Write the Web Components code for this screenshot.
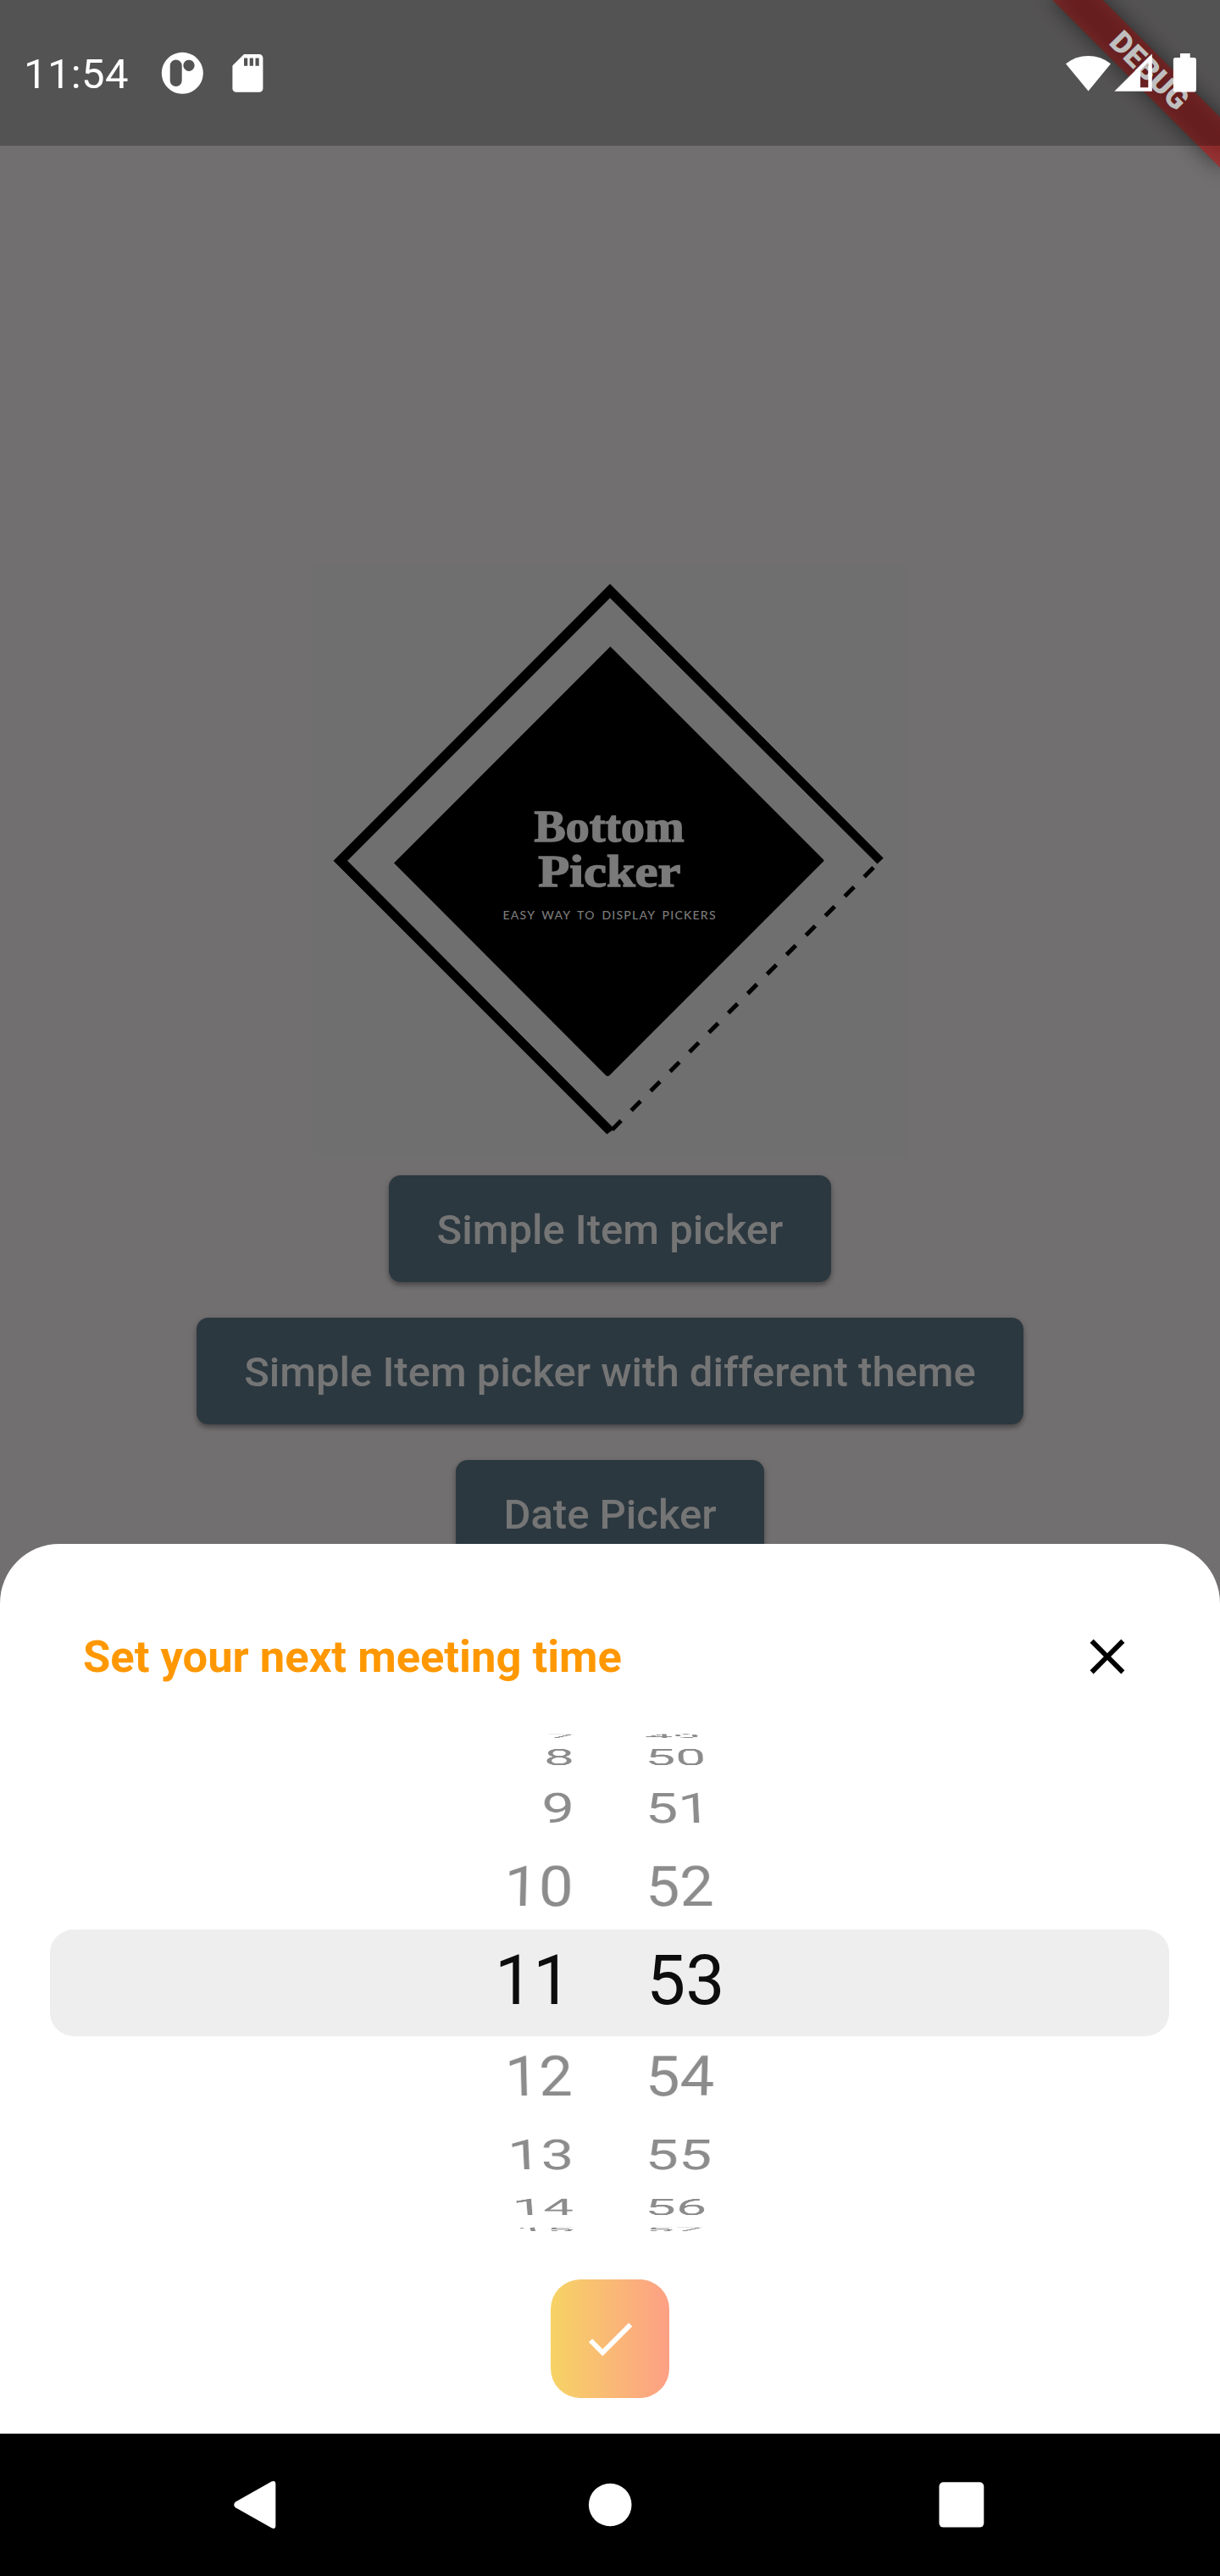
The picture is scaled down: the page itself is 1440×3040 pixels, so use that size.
<!DOCTYPE html>
<html lang="en">
<head>
<meta charset="utf-8">
<title>Bottom Picker</title>
<style>
html,body{margin:0;padding:0}
body{width:1440px;height:3040px;overflow:hidden;font-family:Roboto,"Noto Sans",sans-serif}
</style>
</head>
<body>
<phone-screen></phone-screen>
<script>
const define = (name, html, setup) => customElements.define(name, class extends HTMLElement {
  connectedCallback() {
    if (this.shadowRoot) return;
    const root = this.attachShadow({ mode: 'open' });
    const t = document.createElement('template');
    t.innerHTML = html;
    root.appendChild(t.content.cloneNode(true));
    if (setup) setup(this, root);
  }
});

define('status-bar', `
<style>
:host{display:flex;box-sizing:border-box;width:1440px;height:172px;background:rgba(0,0,0,.25);color:#fff;justify-content:space-between}
.time{font-size:49px;line-height:58px;padding:59px 0 0 28px;width:160px;letter-spacing:.35px}
.left,.right{display:flex}
svg{display:block}
</style>
<div class="left">
  <div class="time">11:54</div>
  <svg width="140" height="172" viewBox="188 0 140 172" fill="#fff" fill-rule="evenodd">
    <path d="M215.3 61.8a24.5 24.5 0 1 0 .01 0ZM207.7 70.4a7 7 0 0 1 7 7v17.6a7 7 0 0 1-14 0V77.4a7 7 0 0 1 7-7ZM223 70.7a6.6 6.6 0 1 1-.01 0Z"/>
    <path d="M288 64h18a4.4 4.4 0 0 1 4.4 4.4v36a4.4 4.4 0 0 1-4.4 4.4h-27.200a4.400 4.400 0 0 1-4.400-4.400V77.500ZM288 68.500v9.300h4.200v-9.300ZM294.700 68.500v9.300h4.200v-9.300ZM301.500 68.500v9.300h4.200v-9.300Z"/>
  </svg>
</div>
<div class="right">
  <svg width="200" height="172" viewBox="1240 0 200 172" fill="#fff" fill-rule="evenodd">
    <path d="M1284.600 107.400L1258 75.300A42 42 0 0 1 1311 75.300Z"/>
    <path d="M1315.300 107.800L1359.800 63.500V107.800ZM1346 82.800V103.200H1355.300V73.500Z"/>
    <path d="M1393 63h11.700v5h4.700a2.500 2.500 0 0 1 2.500 2.500v35.500a2.500 2.500 0 0 1-2.500 2.500h-22a2.500 2.500 0 0 1-2.500-2.500V70.500a2.500 2.500 0 0 1 2.500-2.500h5.600Z"/>
  </svg>
</div>`);

define('debug-banner', `
<style>
:host{display:block;width:260px;height:260px;overflow:hidden}
svg{display:block;font-family:Roboto,sans-serif}
</style>
<svg width="260" height="260" viewBox="1180 0 260 260">
  <defs><filter id="s" x="-50%" y="-200%" width="200%" height="500%"><feGaussianBlur stdDeviation="12.6"/></filter></defs>
  <g transform="translate(1356 84) rotate(45)">
    <rect x="-140" y="-21" width="280" height="42" opacity=".5" filter="url(#s)"/>
    <rect x="-140" y="-21" width="280" height="42" fill="#b71c1c" fill-opacity=".627"/>
    <text x="0" y="11.200" font-size="35.700" font-weight="900" fill="#fff" text-anchor="middle" textLength="114" lengthAdjust="spacingAndGlyphs">DEBUG</text>
  </g>
</svg>`);

define('brand-logo', `
<style>:host{display:block;width:700px;height:700px;background:#706f6f}svg{display:block}</style>
<svg width="700" height="700" viewBox="370 666 700 700">
  <path d="M720 689.500L1042.300 1012.700L1035.500 1019L720 705.300L409.600 1015.800L722 1329.500L724.500 1332L722 1334L716.300 1338L394 1015.800Z" stroke="#000" stroke-width=".9"/>
  <path d="M720.400 763L972 1014.500Q972.800 1015.500 972 1016.500L719.500 1269Q717.200 1271 715 1269L465 1018.500Z"/>
  <path d="M1031 1023.700L722.500 1333.200" stroke="#000" stroke-width="5" stroke-dasharray="15.500 16.960"/>
  <g fill="#7a7a7a" text-anchor="middle">
    <g font-family="'Liberation Serif',serif" font-weight="700" font-size="53" stroke="#7a7a7a" stroke-width="1.500">
      <text x="719" y="993" textLength="177" lengthAdjust="spacingAndGlyphs">Bottom</text>
      <text x="719.300" y="1046.300" textLength="168" lengthAdjust="spacingAndGlyphs">Picker</text>
    </g>
    <text x="719" y="1084.800" font-family="Lato,sans-serif" font-size="14" font-weight="500" word-spacing="3" textLength="251">EASY WAY TO DISPLAY PICKERS</text>
  </g>
</svg>`);

define('raised-button', `
<style>
:host{display:flex;box-sizing:border-box;height:126px;width:var(--w);padding-top:3px;border-radius:14px;background:#2c3840;color:#757575;
 align-items:center;justify-content:center;font-size:49px;font-weight:500;line-height:58px;white-space:nowrap;
 box-shadow:0 4px 5px rgba(0,0,0,.25),0 2px 8px rgba(0,0,0,.14)}
</style><slot></slot>`);

define('home-page', `
<style>
:host{display:flex;flex-direction:column;align-items:center;box-sizing:border-box;height:2872px;padding-top:666px;background:#716f70}
.buttons{display:flex;flex-direction:column;align-items:center;gap:42px;padding-top:21px}
</style>
<brand-logo></brand-logo>
<div class="buttons">
  <raised-button style="--w:522px">Simple Item picker</raised-button>
  <raised-button style="--w:976px">Simple Item picker with different theme</raised-button>
  <raised-button style="--w:364px">Date Picker</raised-button>
</div>`);

/* One wheel column. Each row: text, ink left, ink right, cap top, baseline, width taper at the top edge. */
const ctx = document.createElement('canvas').getContext('2d');
define('wheel-column', `
<style>
:host{display:flex;flex-direction:column;font-size:82px}
.row{display:flex;align-items:flex-end;color:#8c8c8c}
.row.on{color:#0d0d0d}
span{display:block;line-height:82px;margin-bottom:-13px;white-space:nowrap}
</style>`, (el, root) => {
  const left = +el.getAttribute('left'), vanish = +el.getAttribute('vanish') - left;
  let y = 2040;
  ctx.font = '82px Roboto';
  for (const line of el.getAttribute('rows').split(';')) {
    const [text, x0, x1, top, base, taper] = line.split(',').map(s => s.trim());
    const m = ctx.measureText(text), inkL = -m.actualBoundingBoxLeft;
    const sx = (x1 - x0) / (m.actualBoundingBoxRight - inkL);
    const sy = (base - top) / 58.3;
    const p = -taper / 58.3;
    const row = document.createElement('div');
    row.className = 'row' + (text === '11' || text === '53' ? ' on' : '');
    row.style.height = (base - y) + 'px';
    y = +base;
    const s = document.createElement('span');
    s.textContent = text;
    s.style.transformOrigin = '0 69px';
    s.style.transform = `translateX(${vanish}px) matrix3d(1,0,0,0, 0,${sy * (1 + +taper)},0,${p}, 0,0,1,0, 0,0,0,1) translateX(${x0 - left - inkL * sx - vanish}px) scaleX(${sx})`;
    row.appendChild(s);
    root.appendChild(row);
  }
});

define('time-wheel', `
<style>
:host{display:grid;height:600px;margin-top:0}
.band,.cols{grid-area:1/1}
.band{height:126px;margin:237px 60px 0 59px;border-radius:28px;background:#eee}
.cols{display:flex;padding-left:580px}
wheel-column{width:160px}
</style>
<div class="band"></div>
<div class="cols">
<wheel-column left="580" vanish="674" rows="7,646.7,677,2046.400,2050.9,.03;8,644.7,675,2064,2083,.03;9,642,673.7,2116,2151,.03;10,599.500,673.3,2202,2248.900,.02;11,590,658.7,2307.300,2365,0;12,602,674.3,2426,2472.900,-.02;13,605.500,673.3,2525,2560,-.03;14,610.500,676.3,2594.700,2613.900,-.03;15,615,676.3,2628.400,2632.900,-.03"></wheel-column>
<wheel-column left="740" vanish="767" rows="49,762,824.7,2046.400,2050.9,.03;50,766,831,2064,2083,.03;51,766.7,826,2116,2151,.03;52,767.3,841.3,2202,2248.900,.02;53,769,850.3,2307.300,2365,0;54,767,842,2426,2472.900,-.02;55,766.7,837,2525,2560,-.03;56,766,831.3,2594.700,2613.900,-.03;57,766,827.3,2628.400,2632.900,-.03"></wheel-column>
</div>`);

define('picker-sheet', `
<style>
:host{display:flex;flex-direction:column;box-sizing:border-box;width:1440px;height:1050px;background:#fff;border-radius:70px 70px 0 0}
header{display:flex;justify-content:space-between;align-items:center;box-sizing:border-box;height:218px;padding:48px 98px 0 98px}
h1{margin:0;font-size:52.500px;line-height:62px;font-weight:700;color:#ff9800}
svg{display:block}
.ok{display:flex;align-items:center;justify-content:center;width:140px;height:140px;margin:50px auto 0;border-radius:35px;background:linear-gradient(90deg,#f6d365,#fda085)}
</style>
<header>
  <h1>Set your next meeting time</h1>
  <svg width="70" height="70" viewBox="0 0 24 24"><path d="M19 6.410L17.590 5 12 10.590 6.410 5 5 6.410 10.590 12 5 17.590 6.410 19 12 13.410 17.590 19 19 17.590 13.410 12z"/></svg>
</header>
<time-wheel></time-wheel>
<div class="ok"><svg width="70" height="70" viewBox="0 0 24 24" fill="#fff"><path d="M9 16.170L4.830 12l-1.420 1.410L9 19 21 7l-1.410-1.410z"/></svg></div>`);

define('nav-bar', `
<style>:host{display:flex;width:1440px;height:168px;background:#000}svg{display:block}</style>
<svg width="1440" height="168" viewBox="0 2872 1440 168" fill="#fff">
  <path d="M278 2952.500L320.500 2928.500Q325.300 2926.500 325.300 2931.500V2980.500Q325.300 2985.500 320.500 2983.300L278 2959.300Q274.300 2956 278 2952.500Z"/>
  <circle cx="720.200" cy="2956" r="25.300"/>
  <rect x="1108.500" y="2929.300" width="52.800" height="53.300" rx="5"/>
</svg>`);

define('phone-screen', `
<style>
:host{display:grid;width:1440px;height:3040px;grid-template-rows:2872px 168px;overflow:hidden}
home-page,picker-sheet,status-bar,debug-banner{grid-area:1/1}
home-page{min-width:0}
picker-sheet{align-self:end}
debug-banner{justify-self:end;align-self:start}
status-bar{align-self:start}
</style>
<home-page></home-page>
<picker-sheet></picker-sheet>
<debug-banner></debug-banner>
<status-bar></status-bar>
<nav-bar></nav-bar>`);
</script>
</body>
</html>
